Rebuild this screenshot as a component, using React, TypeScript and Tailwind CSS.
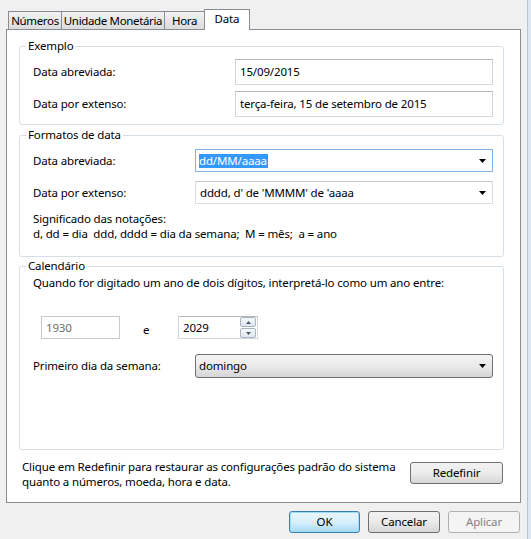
import React from 'react';

const Arrow = () => (
  <svg width="7" height="4" viewBox="0 0 7 4" className="shrink-0">
    <path d="M0 0 H7 L3.5 4 Z" fill="#000" />
  </svg>
);

const Tab = ({ label, w, last }: { label: string; w: string; last?: boolean }) => (
  <div
    className={`${w} mt-[2px] h-[18px] border-l border-t border-[#898c95] ${last ? 'border-r' : ''} bg-gradient-to-b from-[#f2f2f2] to-[#dcdcdc] flex items-center justify-center tracking-[-0.35px] whitespace-nowrap`}
  >
    {label}
  </div>
);

const GroupBox = ({ title, h, children }: { title: string; h: string; children: React.ReactNode }) => (
  <fieldset className={`${h} border border-[#d5dfe5] rounded-[3px] ml-[12px] mr-[16px]`}>
    <legend className="ml-[6px] px-[2px] leading-[16px]">{title}</legend>
    {children}
  </fieldset>
);

const TextBox = ({ value, w, h }: { value: string; w: string; h: string }) => (
  <div className={`${w} ${h} border border-[#d2d6dc] border-t-[#b5b8bd] bg-white flex items-center pl-[4px]`}>{value}</div>
);

const Button = ({ label, cls }: { label: string; cls: string }) => (
  <div className={`h-[22px] rounded-[3px] border flex items-center justify-center whitespace-nowrap ${cls}`}>{label}</div>
);

export default function App() {
  return (
    <div
      className="w-[531px] h-[539px] bg-[#f0f0f0] flex text-[11.5px] tracking-[-0.15px] text-black overflow-hidden"
      style={{ fontFamily: '"Noto Sans", "Open Sans", sans-serif' }}
    >
      <div className="w-[527px] flex flex-col pt-[9px] pl-[6px] pr-[6px]">
        {/* tabs */}
        <div className="h-[20px] flex ml-[2px] relative z-10">
          <Tab label="Números" w="w-[53px]" />
          <Tab label="Unidade Monetária" w="w-[103px]" />
          <Tab label="Hora" w="w-[40px]" />
          <div className="w-[46px] h-[21px] border border-b-0 border-[#898c95] bg-white flex items-center justify-center pb-[2px]">
            Data
          </div>
        </div>

        {/* panel */}
        <div className="h-[474px] w-[515px] border border-[#898c95] bg-white flex flex-col pt-[8px]">
          <GroupBox title="Exemplo" h="h-[87px]">
            <div className="flex flex-col gap-[6px] mt-[5px] pl-[13px]">
              <div className="flex items-center">
                <div className="w-[202px]">Data abreviada:</div>
                <TextBox value="15/09/2015" w="w-[258px]" h="h-[26px]" />
              </div>
              <div className="flex items-center">
                <div className="w-[202px]">Data por extenso:</div>
                <TextBox value="terça-feira, 15 de setembro de 2015" w="w-[258px]" h="h-[26px]" />
              </div>
            </div>
          </GroupBox>

          <div className="h-[2px]" />

          <GroupBox title="Formatos de data" h="h-[130px]">
            <div className="flex flex-col mt-[6px] pl-[13px]">
              <div className="flex items-center">
                <div className="w-[162px]">Data abreviada:</div>
                <div className="w-[298px] h-[23px] border border-[#7eb4ea] bg-white flex items-center pl-[3px] pr-[6px]">
                  <span className="bg-[#3399ff] text-white leading-[14px] pr-[1px]">dd/MM/aaaa</span>
                  <div className="flex-1" />
                  <Arrow />
                </div>
              </div>
              <div className="flex items-center mt-[9px]">
                <div className="w-[162px]">Data por extenso:</div>
                <div className="w-[298px] h-[23px] border border-[#d9dde2] border-t-[#c4c7cb] bg-white flex items-center pl-[4px] pr-[6px]">
                  <span>dddd, d' de 'MMMM' de 'aaaa</span>
                  <div className="flex-1" />
                  <Arrow />
                </div>
              </div>
              <div className="mt-[7px] leading-[15px]">
                <div>Significado das notações:</div>
                <div className="whitespace-pre">d, dd = dia  ddd, dddd = dia da semana;  M = mês;  a = ano</div>
              </div>
            </div>
          </GroupBox>

          <div className="h-[1px]" />

          <GroupBox title="Calendário" h="h-[192px]">
            <div className="flex flex-col pl-[13px]">
              <div className="leading-[15px] mt-[1px]">
                Quando for digitado um ano de dois dígitos, interpretá-lo como um ano entre:
              </div>
              <div className="flex items-center mt-[26px]">
                <div className="ml-[8px] w-[79px] h-[23px] border border-[#c9c9c9] bg-white flex items-center pl-[4px] text-[#6d6d6d]">
                  1930
                </div>
                <div className="w-[58px] pl-[23px] pt-[4px]">e</div>
                <div className="w-[80px] h-[23px] border border-[#d2d6dc] border-t-[#b5b8bd] bg-white flex items-center pl-[4px] pr-[1px]">
                  <span>2029</span>
                  <div className="flex-1" />
                  <div className="flex flex-col gap-[1px]">
                    <div className="w-[16px] h-[10px] border border-[#a8b4c2] rounded-[2px] bg-gradient-to-b from-[#f6f9fc] to-[#dfe6ee] flex items-center justify-center">
                      <svg width="5" height="3" viewBox="0 0 5 3"><path d="M0 3 L2.5 0 L5 3 Z" fill="#4a5a6e" /></svg>
                    </div>
                    <div className="w-[16px] h-[10px] border border-[#a8b4c2] rounded-[2px] bg-gradient-to-b from-[#f6f9fc] to-[#dfe6ee] flex items-center justify-center">
                      <svg width="5" height="3" viewBox="0 0 5 3"><path d="M0 0 L5 0 L2.5 3 Z" fill="#4a5a6e" /></svg>
                    </div>
                  </div>
                </div>
              </div>
              <div className="flex items-center mt-[15px]">
                <div className="w-[162px]">Primeiro dia da semana:</div>
                <div className="w-[298px] h-[24px] rounded-[3px] border border-[#707070] bg-gradient-to-b from-[#f2f2f2] via-[#ebebeb] to-[#d4d4d4] flex items-center pl-[3px] pr-[6px]">
                  <span>domingo</span>
                  <div className="flex-1" />
                  <Arrow />
                </div>
              </div>
            </div>
          </GroupBox>

          <div className="flex items-start mt-[8px] pl-[15px] pr-[17px]">
            <div className="flex-1 leading-[15px] mt-[1px] whitespace-nowrap">
              <div>Clique em Redefinir para restaurar as configurações padrão do sistema</div>
              <div>quanto a números, moeda, hora e data.</div>
            </div>
            <Button
              label="Redefinir"
              cls="w-[93px] mt-[4px] border-[#707070] bg-gradient-to-b from-[#f2f2f2] via-[#ebebeb] to-[#d6d6d6]"
            />
          </div>
        </div>

        {/* dialog buttons */}
        <div className="flex justify-end gap-[8px] mt-[8px] pr-[1px]">
          <Button
            label="OK"
            cls="w-[71px] border-[#3c7fb1] bg-gradient-to-b from-[#eaf6fd] via-[#d9f0fc] to-[#a7d9f5] shadow-[inset_0_0_0_1px_#9ee0fb]"
          />
          <Button
            label="Cancelar"
            cls="w-[72px] border-[#707070] bg-gradient-to-b from-[#f2f2f2] via-[#ebebeb] to-[#d6d6d6]"
          />
          <Button label="Aplicar" cls="w-[72px] border-[#adb2b5] bg-[#f4f4f4] text-[#838383]" />
        </div>
      </div>

      {/* window frame */}
      <div className="w-[4px] h-full flex">
        <div className="w-[1px] bg-[#b8c5d6]" />
        <div className="w-[3px] bg-[#dbe6f3]" />
      </div>
    </div>
  );
}
